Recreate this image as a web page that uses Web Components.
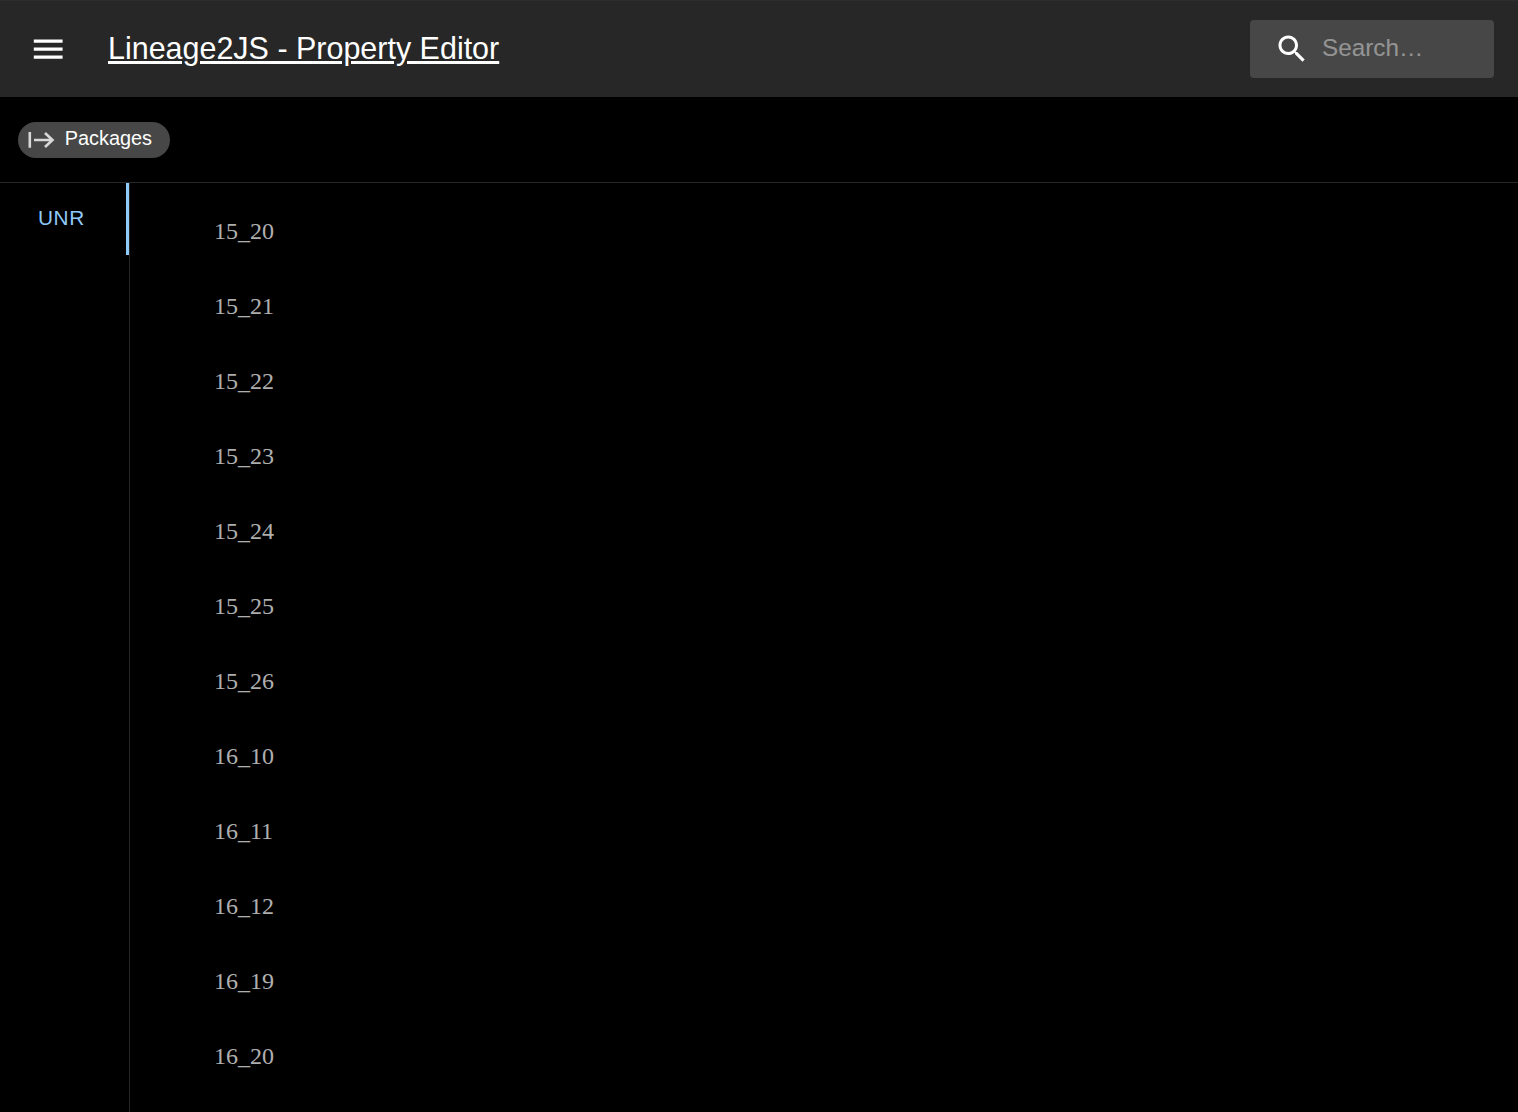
<!doctype html>
<html><head><meta charset="utf-8"><style>
html,body{margin:0;height:100%;background:#000;overflow:hidden}
body{font-family:"Liberation Sans",Arial,sans-serif;color:#fff;display:flex;flex-direction:column;height:1112px}
</style></head><body>
<app-bar></app-bar>
<crumb-bar></crumb-bar>
<pkg-view>
  <pkg-tab slot="tabs">UNR</pkg-tab>
  <pkg-row>15_20</pkg-row><pkg-row>15_21</pkg-row><pkg-row>15_22</pkg-row><pkg-row>15_23</pkg-row>
  <pkg-row>15_24</pkg-row><pkg-row>15_25</pkg-row><pkg-row>15_26</pkg-row><pkg-row>16_10</pkg-row>
  <pkg-row>16_11</pkg-row><pkg-row>16_12</pkg-row><pkg-row>16_19</pkg-row><pkg-row>16_20</pkg-row>
</pkg-view>
<script>
function def(name,html){customElements.define(name,class extends HTMLElement{constructor(){super();this.attachShadow({mode:'open'}).innerHTML=html}})}
def('app-bar',`<style>
:host{display:flex;flex:none;align-items:center;height:97px;box-sizing:border-box;background:#272727;border-top:1px solid #2c2d30;padding:0 24px 0 29px}
.menu{display:block;width:38.400px;height:38.400px;margin-right:40.600px;flex:none}
a{font-size:30.480px;line-height:1.5;color:#fff;text-decoration:underline;white-space:nowrap}
.search{margin-left:auto;width:244px;height:58px;box-sizing:border-box;background:#474747;border-radius:4px;display:flex;align-items:center;padding-left:24px}
.search svg{width:36px;height:36px;fill:#fff;flex:none;margin-right:12px}
.search span{font-size:24.300px;color:#fff;opacity:.42;line-height:29px;margin-top:-4px}
</style>
<svg class="menu" viewBox="0 0 24 24" fill="#fff"><path d="M3 18h18v-2H3v2zm0-5h18v-2H3v2zm0-7v2h18V6H3z"/></svg>
<a>Lineage2JS - Property Editor</a>
<div class="search"><svg viewBox="0 0 24 24"><path d="M15.5 14h-.79l-.28-.27C15.41 12.59 16 11.11 16 9.5 16 5.91 13.09 3 9.5 3S3 5.91 3 9.5 5.91 16 9.5 16c1.61 0 3.09-.59 4.23-1.57l.27.28v.79l5 4.99L20.49 19l-4.99-5zm-6 0C7.01 14 5 11.99 5 9.5S7.01 5 9.5 5 14 7.01 14 9.5 11.99 14 9.5 14z"/></svg><span>Search…</span></div>`);
def('crumb-bar',`<style>
:host{display:flex;flex:none;align-items:center;height:86px;box-sizing:border-box;border-bottom:1px solid #272727;padding:0 18px 0}
.chip{display:flex;align-items:center;height:36px;width:152px;box-sizing:border-box;background:#474747;border-radius:18px;padding-left:9px;font-size:19.900px;color:#fff}
svg{width:28px;height:28px;flex:none;margin-right:10px;stroke:#d8d8d8;fill:none;stroke-width:2.600}
span{display:block;margin-left:-.3px;position:relative;top:-1px}
</style>
<div class="chip"><svg viewBox="0 0 28 28"><path d="M2.800 6v15.700M7 14H25.500M18 7 25.500 14 18 21"/></svg><span>Packages</span></div>`);
def('pkg-view',`<style>
:host{display:flex;flex:1;min-height:0;overflow:hidden}
.tabs{flex:none;width:130px;box-sizing:border-box;border-right:1px solid #272727}
.list{flex:1;padding:11px 0 0 84px}
</style><div class="tabs"><slot name="tabs"></slot></div><div class="list"><slot></slot></div>`);
def('pkg-tab',`<style>
:host{display:block;height:72px;box-sizing:border-box;width:129px;border-right:3px solid #90caf9;color:#90caf9;font-size:20.800px;letter-spacing:.59px;padding:23px 0 0 38px;line-height:23px}
</style><slot></slot>`);
def('pkg-row',`<style>
:host{display:flex;align-items:center;height:75px;font-family:"Liberation Serif","Times New Roman",serif;font-size:24px;color:rgba(255,255,255,.7)}
</style><slot></slot>`);
</script></body></html>
